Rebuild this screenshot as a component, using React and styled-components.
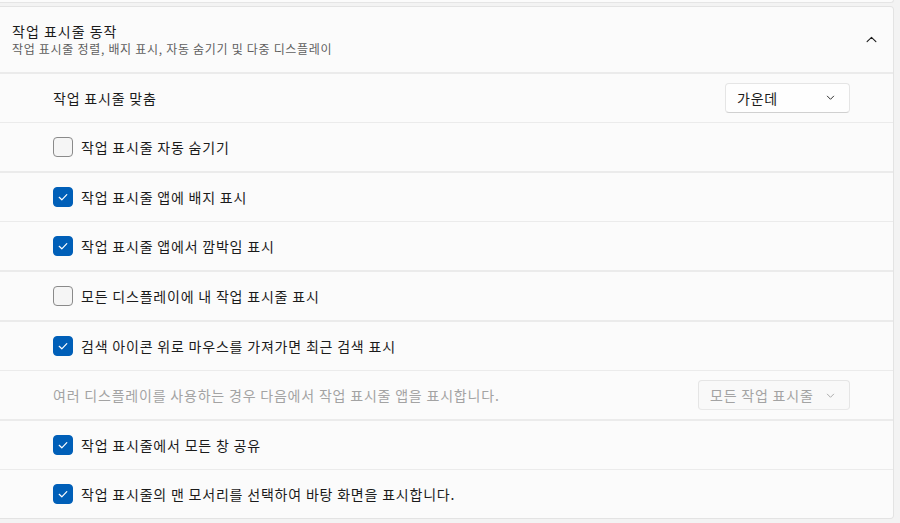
import React from "react";
import styled, { createGlobalStyle } from "styled-components";

const Global = createGlobalStyle`
  html, body { margin: 0; padding: 0; background: #f3f3f3; }
  body { font-family: "Noto Sans CJK KR", "Noto Sans", sans-serif; color: #1b1b1b; }
`;

const Page = styled.div`
  width: 900px;
  height: 523px;
  overflow: hidden;
  padding-right: 6px;
  box-sizing: border-box;
  display: flex;
  flex-direction: column;
  gap: 3px;
`;

const PrevCard = styled.div`
  height: 2px;
  background: #fbfbfb;
  border: 1px solid #e5e5e5;
  border-top: none;
  border-left: none;
  border-bottom-right-radius: 4px;
`;

const Card = styled.div`
  background: #ebebeb;
  border: 1px solid #e3e3e3;
  border-left: none;
  border-radius: 0 4px 4px 0;
  display: flex;
  flex-direction: column;
  gap: 1.6px;
  overflow: hidden;
`;

const Header = styled.div`
  background: #fbfbfb;
  min-height: 65px;
  display: flex;
  align-items: center;
  justify-content: space-between;
  padding: 0 16px 0 12px;
`;

const HeaderText = styled.div`
  display: flex;
  flex-direction: column;
  margin-top: -1px;
`;

const Title = styled.div`
  font-size: 14px;
  line-height: 20px;
  letter-spacing: 1px;
  color: #1b1b1b;
`;

const Subtitle = styled.div`
  font-size: 12px;
  line-height: 16px;
  letter-spacing: 0.7px;
  color: #5f5f5f;
`;

const Row = styled.div`
  background: #fbfbfb;
  height: 48px;
  display: flex;
  align-items: center;
  justify-content: space-between;
  padding: 0 43px 0 53px;
  font-size: 14px;
  letter-spacing: 0.8px;
  color: ${(p) => (p.$disabled ? "#a3a3a3" : "#1b1b1b")};
`;

const CheckLabel = styled.label`
  display: flex;
  align-items: center;
  gap: 8px;
`;

const Box = styled.span`
  width: 18px;
  height: 18px;
  border-radius: 4px;
  display: inline-flex;
  align-items: center;
  justify-content: center;
  background: ${(p) => (p.$checked ? "#005fb8" : "#f5f5f5")};
  border: 1px solid ${(p) => (p.$checked ? "#005fb8" : "#8a8a8a")};
`;

const Select = styled.div`
  height: 30px;
  box-sizing: border-box;
  width: ${(p) => p.$w}px;
  border: 1px solid #e5e5e5;
  border-bottom-color: ${(p) => (p.$disabled ? "#e8e8e8" : "#d0d0d0")};
  border-radius: 4px;
  background: ${(p) => (p.$disabled ? "#f9f9f9" : "#fefefe")};
  display: flex;
  align-items: center;
  justify-content: space-between;
  padding: 0 14px 0 11px;
  font-size: 14px;
  letter-spacing: 0.8px;
  color: ${(p) => (p.$disabled ? "#a3a3a3" : "#1b1b1b")};
`;

const Chevron = ({ up, color = "#1b1b1b", size = 10 }) => (
  <svg width={size} height={size} viewBox="0 0 10 10">
    <path
      d={up ? "M1 7 L5 3 L9 7" : "M1.5 3.5 L5 7 L8.5 3.5"}
      fill="none"
      stroke={color}
      strokeWidth="1"
      strokeLinecap="round"
      strokeLinejoin="round"
    />
  </svg>
);

const Check = () => (
  <svg width="12" height="12" viewBox="0 0 12 12">
    <path d="M2.2 6.3 L4.8 8.8 L9.8 3.6" fill="none" stroke="#fff" strokeWidth="1.2" strokeLinecap="round" strokeLinejoin="round" />
  </svg>
);

const CheckRow = ({ checked, children }) => (
  <Row>
    <CheckLabel>
      <Box $checked={checked}>{checked && <Check />}</Box>
      {children}
    </CheckLabel>
  </Row>
);

export default function App() {
  return (
    <>
      <Global />
      <Page>
        <PrevCard />
        <Card>
          <Header>
            <HeaderText>
              <Title>작업 표시줄 동작</Title>
              <Subtitle>작업 표시줄 정렬, 배지 표시, 자동 숨기기 및 다중 디스플레이</Subtitle>
            </HeaderText>
            <Chevron up size={11} />
          </Header>
          <Row>
            <span>작업 표시줄 맞춤</span>
            <Select $w={125}>
              <span>가운데</span>
              <Chevron size={9} />
            </Select>
          </Row>
          <CheckRow checked={false}>작업 표시줄 자동 숨기기</CheckRow>
          <CheckRow checked>작업 표시줄 앱에 배지 표시</CheckRow>
          <CheckRow checked>작업 표시줄 앱에서 깜박임 표시</CheckRow>
          <CheckRow checked={false}>모든 디스플레이에 내 작업 표시줄 표시</CheckRow>
          <CheckRow checked>검색 아이콘 위로 마우스를 가져가면 최근 검색 표시</CheckRow>
          <Row $disabled>
            <span>여러 디스플레이를 사용하는 경우 다음에서 작업 표시줄 앱을 표시합니다.</span>
            <Select $w={152} $disabled>
              <span>모든 작업 표시줄</span>
              <Chevron size={9} color="#a3a3a3" />
            </Select>
          </Row>
          <CheckRow checked>작업 표시줄에서 모든 창 공유</CheckRow>
          <CheckRow checked>작업 표시줄의 맨 모서리를 선택하여 바탕 화면을 표시합니다.</CheckRow>
        </Card>
      </Page>
    </>
  );
}
